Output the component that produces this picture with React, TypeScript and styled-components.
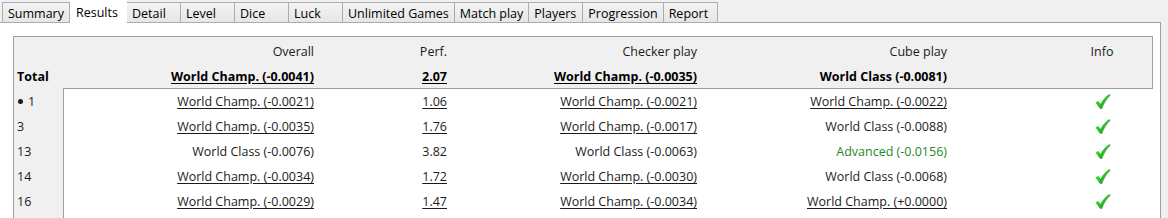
import React from "react";
import styled, { createGlobalStyle } from "styled-components";

const Global = createGlobalStyle`
  html, body { margin: 0; padding: 0; background: #f0f0f0; }
  body { font-family: "Open Sans", "Noto Sans", sans-serif; font-size: 12.5px; color: #1b1b1b; }
  * { box-sizing: border-box; }
`;

const Page = styled.div`
  width: 1168px;
  height: 218px;
  overflow: hidden;
  background: #f0f0f0;
`;

const TabBar = styled.div`
  display: flex;
  align-items: flex-end;
  height: 23px;
  padding-left: 2px;
  position: relative;
  z-index: 1;
`;

const Tab = styled.div<{ $active?: boolean }>`
  height: ${(p) => (p.$active ? "23px" : "21px")};
  min-width: ${(p) => (p.$active ? "57px" : "54px")};
  padding: 0 ${(p) => (p.$active ? "6px" : "5px")};
  display: flex;
  align-items: center;
  padding-top: ${(p) => (p.$active ? "0" : "1px")};
  border: 1px solid #acacac;
  border-bottom: ${(p) => (p.$active ? "none" : "1px solid #acacac")};
  border-left: ${(p) => (p.$active ? "none" : "1px solid #acacac")};
  border-right-color: ${(p) => (p.$active ? "transparent" : "#acacac")};
  border-top-color: ${(p) => (p.$active ? "transparent" : "#acacac")};
  background: ${(p) =>
    p.$active ? "#ffffff" : "linear-gradient(#f3f3f3, #e6e6e6)"};
  & + & { border-left: none; }
  white-space: nowrap;
  color: #000;
`;

const Pane = styled.div`
  width: 1161px;
  height: 260px;
  margin-top: -1px;
  background: #ffffff;
  border-top: 1px solid #a0a0a0;
  border-right: 1px solid #a0a0a0;
  padding: 13px 0 0 13px;
`;

const TableBox = styled.div`
  width: 1140px;
  height: 260px;
  border: 1px solid #a0a0a0;
  background: #f0f0f0;
  padding-top: 1px;
  display: flex;
  flex-direction: column;
`;

const Row = styled.div<{ $fill?: boolean }>`
  display: grid;
  grid-template-columns: 49px 1fr;
  height: ${(p) => (p.$fill ? "auto" : "25px")};
  flex: ${(p) => (p.$fill ? "1" : "none")};
`;

const Label = styled.div<{ $bold?: boolean }>`
  display: flex;
  align-items: center;
  padding-left: 3px;
  padding-top: 1px;
  font-weight: ${(p) => (p.$bold ? 700 : 400)};
  color: ${(p) => (p.$bold ? "#000" : "#1b1b1b")};
`;

const Bullet = styled.span`
  display: inline-block;
  width: 5px;
  height: 5px;
  border-radius: 50%;
  background: #1b1b1b;
  margin: 0 5px 0 1px;
`;

const Body = styled.div<{ $data?: boolean; $first?: boolean }>`
  display: grid;
  grid-template-columns: 253px 133px 250px 250px 101px 102px;
  background: ${(p) => (p.$data ? "#ffffff" : "transparent")};
  border-left: 1px solid ${(p) => (p.$data ? "#a0a0a0" : "transparent")};
  border-top: ${(p) => (p.$first ? "1px solid #a0a0a0" : "none")};
`;

const Cell = styled.div<{ $bold?: boolean; $u?: boolean; $green?: boolean; $center?: boolean }>`
  display: flex;
  align-items: center;
  justify-content: ${(p) => (p.$center ? "center" : "flex-end")};
  padding-right: ${(p) => (p.$center ? "0" : "3px")};
  padding-top: 1px;
  font-weight: ${(p) => (p.$bold ? 700 : 400)};
  text-decoration: ${(p) => (p.$u ? "underline" : "none")};
  text-underline-offset: 2px;
  color: ${(p) => (p.$green ? "#1f8a1f" : p.$bold ? "#000" : "#1b1b1b")};
  white-space: nowrap;
`;

const Check = () => (
  <svg width="17" height="17" viewBox="0 0 17 17">
    <defs>
      <linearGradient id="cg" x1="0" y1="0" x2="1" y2="1">
        <stop offset="0" stopColor="#6ef06e" />
        <stop offset="0.5" stopColor="#22c922" />
        <stop offset="1" stopColor="#0b7d0b" />
      </linearGradient>
    </defs>
    <path
      d="M1.5 9.5 L4 8 L6.5 11 C8.5 7 11.5 3.5 15.5 1 L16 2 C12.5 5 10 9 7.5 15.5 L6 15.5 Z"
      fill="#2a4a2a"
      opacity="0.55"
      transform="translate(0.6,0.6)"
    />
    <path
      d="M1.5 9.5 L4 8 L6.5 11 C8.5 7 11.5 3.5 15.5 1 L16 2 C12.5 5 10 9 7.5 15.5 L6 15.5 Z"
      fill="url(#cg)"
    />
  </svg>
);

type C = { t: string; u?: boolean; g?: boolean };

const rows: { label: string; bullet?: boolean; cells: C[] }[] = [
  {
    label: "1",
    bullet: true,
    cells: [
      { t: "World Champ. (-0.0021)", u: true },
      { t: "1.06", u: true },
      { t: "World Champ. (-0.0021)", u: true },
      { t: "World Champ. (-0.0022)", u: true },
    ],
  },
  {
    label: "3",
    cells: [
      { t: "World Champ. (-0.0035)", u: true },
      { t: "1.76", u: true },
      { t: "World Champ. (-0.0017)", u: true },
      { t: "World Class (-0.0088)" },
    ],
  },
  {
    label: "13",
    cells: [
      { t: "World Class (-0.0076)" },
      { t: "3.82" },
      { t: "World Class (-0.0063)" },
      { t: "Advanced (-0.0156)", g: true },
    ],
  },
  {
    label: "14",
    cells: [
      { t: "World Champ. (-0.0034)", u: true },
      { t: "1.72", u: true },
      { t: "World Champ. (-0.0030)", u: true },
      { t: "World Class (-0.0068)" },
    ],
  },
  {
    label: "16",
    cells: [
      { t: "World Champ. (-0.0029)", u: true },
      { t: "1.47", u: true },
      { t: "World Champ. (-0.0034)", u: true },
      { t: "World Champ. (+0.0000)", u: true },
    ],
  },
];

const tabs = [
  "Summary",
  "Results",
  "Detail",
  "Level",
  "Dice",
  "Luck",
  "Unlimited Games",
  "Match play",
  "Players",
  "Progression",
  "Report",
];

export default function App() {
  return (
    <Page>
      <Global />
      <TabBar>
        {tabs.map((t) => (
          <Tab key={t} $active={t === "Results"}>
            {t}
          </Tab>
        ))}
      </TabBar>
      <Pane>
        <TableBox>
          <Row>
            <Label />
            <Body>
              <Cell>Overall</Cell>
              <Cell>Perf.</Cell>
              <Cell>Checker play</Cell>
              <Cell>Cube play</Cell>
              <Cell />
              <Cell $center>Info</Cell>
            </Body>
          </Row>
          <Row>
            <Label $bold>Total</Label>
            <Body>
              <Cell $bold $u>World Champ. (-0.0041)</Cell>
              <Cell $bold $u>2.07</Cell>
              <Cell $bold $u>World Champ. (-0.0035)</Cell>
              <Cell $bold>World Class (-0.0081)</Cell>
              <Cell />
              <Cell />
            </Body>
          </Row>
          {rows.map((r, i) => (
            <Row key={r.label}>
              <Label>
                {r.bullet && <Bullet />}
                {r.label}
              </Label>
              <Body $data $first={i === 0}>
                {r.cells.map((c, j) => (
                  <Cell key={j} $u={c.u} $green={c.g}>
                    {c.t}
                  </Cell>
                ))}
                <Cell />
                <Cell $center>
                  <Check />
                </Cell>
              </Body>
            </Row>
          ))}
          <Row $fill>
            <Label />
            <Body $data />
          </Row>
        </TableBox>
      </Pane>
    </Page>
  );
}
